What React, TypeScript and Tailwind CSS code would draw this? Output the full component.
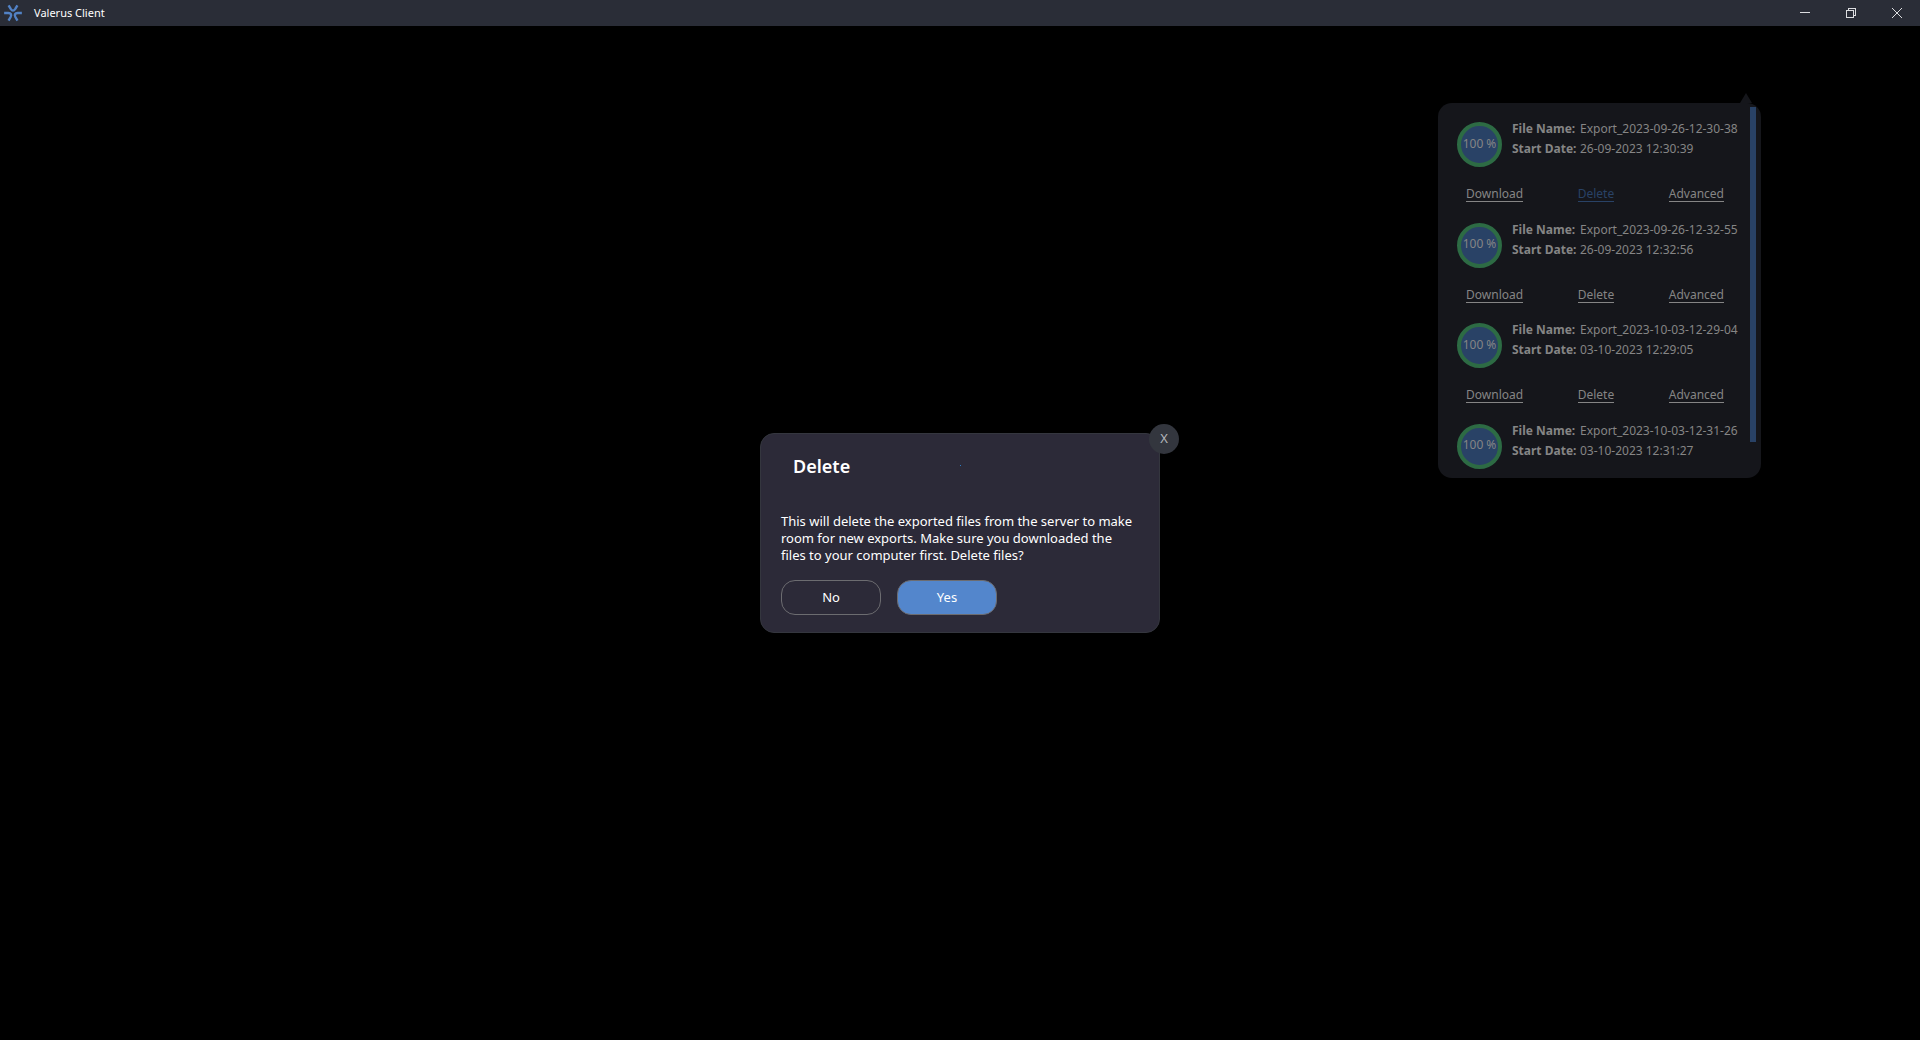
type ExportJob = { name: string; date: string; deleting?: boolean; collapsed?: boolean };

const jobs: ExportJob[] = [
  { name: "Export_2023-09-26-12-30-38", date: "26-09-2023 12:30:39", deleting: true },
  { name: "Export_2023-09-26-12-32-55", date: "26-09-2023 12:32:56" },
  { name: "Export_2023-10-03-12-29-04", date: "03-10-2023 12:29:05" },
  { name: "Export_2023-10-03-12-31-26", date: "03-10-2023 12:31:27", collapsed: true },
];

const arms = [0, 120, 240];

function Logo() {
  return (
    <svg viewBox="0 0 18 18" className="size-[18px]" fill="none" stroke="#5282c6" strokeWidth="2.4" aria-hidden="true">
      {arms.map((angle) => (
        <path key={angle} d="M4.6 1.3L6.7 4.9Q9 8.3 11.3 4.9L13.4 1.3" transform={`rotate(${angle} 9 9)`} />
      ))}
    </svg>
  );
}

function TitleBar() {
  return (
    <header className="flex h-[26px] items-center bg-[#2a2d37] pl-[4px] text-white">
      <Logo />
      <h1 className="grow pl-[12px] text-[11px]">Valerus Client</h1>
      <button type="button" aria-label="Minimize" className="flex h-full w-[46px] items-center justify-center">
        <svg viewBox="0 0 10 10" className="size-[10px]" stroke="#dcdde0" shapeRendering="crispEdges">
          <path d="M0 4.5H10" />
        </svg>
      </button>
      <button type="button" aria-label="Restore" className="flex h-full w-[46px] items-center justify-center">
        <svg viewBox="0 0 10 10" className="size-[10px]" fill="none" stroke="#dcdde0" shapeRendering="crispEdges">
          <path d="M0.5 2.5H7.5V9.5H0.5ZM2.5 2.5V0.5H9.5V7.5H7.5" />
        </svg>
      </button>
      <button type="button" aria-label="Close" className="flex h-full w-[46px] items-center justify-center">
        <svg viewBox="0 0 10 10" className="size-[10px]" stroke="#dcdde0">
          <path d="M0 0L10 10M10 0L0 10" />
        </svg>
      </button>
    </header>
  );
}

function ExportItem({ job }: { job: ExportJob }) {
  return (
    <li>
      <div className="flex h-[45px] gap-[10px] pl-[19px]">
        <div className="flex size-[45px] shrink-0 items-center justify-center rounded-full border-4 border-[#2d6b44] bg-[#294266] pb-[2px] text-[12px] whitespace-nowrap">
          100 %
        </div>
        <dl className="-mt-[3px] grid grid-cols-[66px_1fr] content-start gap-x-[2px] text-[12px] leading-[20px] whitespace-nowrap">
          <dt className="font-bold">File Name:</dt>
          <dd>{job.name}</dd>
          <dt className="font-bold">Start Date:</dt>
          <dd>{job.date}</dd>
        </dl>
      </div>
      {!job.collapsed && (
        <div className="mt-[20px] flex justify-between pr-[37px] pl-[28px] text-[12px] leading-[14px]">
          <a href="#download" className="border-b border-current">Download</a>
          <a href="#delete" className={job.deleting ? "border-b border-current text-[#294266]" : "border-b border-current"}>
            Delete
          </a>
          <a href="#advanced" className="border-b border-current">Advanced</a>
        </div>
      )}
    </li>
  );
}

function ExportPanel() {
  return (
    <aside aria-label="Exports" className="absolute top-[77px] right-[159px] w-[323px] rounded-[14px] bg-[#15161b] text-[#858585]">
      <svg viewBox="0 0 12 10" className="absolute -top-[10px] right-[9px] h-[10px] w-[12px]" fill="#15161b" aria-hidden="true">
        <path d="M6 0L12 10H0Z" />
      </svg>
      <ul className="flex h-[375px] flex-col justify-between pt-[19px] pb-[9px]">
        {jobs.map((job) => (
          <ExportItem key={job.name} job={job} />
        ))}
      </ul>
      <div className="absolute top-[4px] right-[5px] h-[335px] w-[6px] bg-[#294266]" />
    </aside>
  );
}

function DeleteDialog() {
  return (
    <section
      role="dialog"
      aria-labelledby="dialog-title"
      className="relative w-[400px] rounded-[14px] border border-[#34363e] bg-[#2c2a38] px-[20px] pt-[17px] pb-[17px] text-white"
    >
      <button
        type="button"
        aria-label="Close dialog"
        className="absolute -top-[10px] -right-[20px] flex size-[30px] items-center justify-center rounded-full bg-[#33363e] text-[13px] text-[#b4b6bb]"
      >
        X
      </button>
      <span className="absolute top-[31px] left-[199px] size-px bg-[#2b7cc4]" />
      <h2 id="dialog-title" className="pl-[12px] text-[18px] leading-[30px] font-semibold">Delete</h2>
      <p className="mt-[32px] text-[13px] leading-[17px]">
        This will delete the exported files from the server to make room for new exports. Make sure you downloaded the files to your computer first. Delete files?
      </p>
      <div className="mt-[16px] flex gap-[16px] text-[13px]">
        <button type="button" className="h-[35px] w-[100px] rounded-[14px] border border-[#6c6c70]">No</button>
        <button type="button" className="h-[35px] w-[100px] rounded-[14px] border border-[#6c6c70] bg-[#5386cc]">Yes</button>
      </div>
    </section>
  );
}

export default function App() {
  return (
    <div className="flex min-h-screen flex-col bg-black font-['Segoe_UI','Noto_Sans',sans-serif]">
      <TitleBar />
      <main className="relative flex grow items-center justify-center">
        <ExportPanel />
        <DeleteDialog />
      </main>
    </div>
  );
}
